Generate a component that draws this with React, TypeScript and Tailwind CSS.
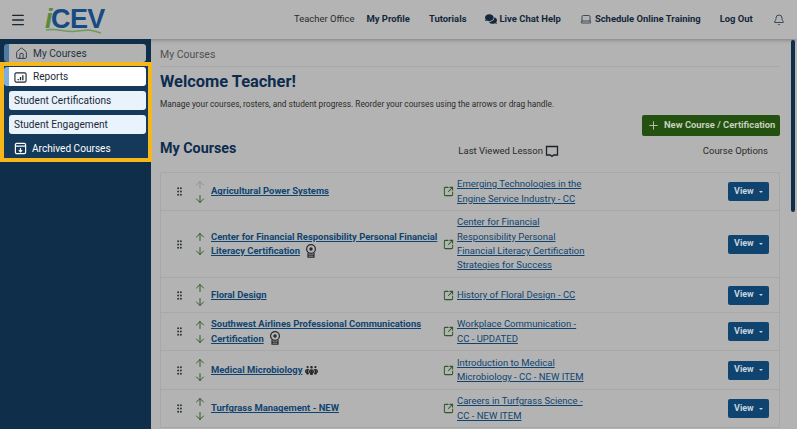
import { ArrowDown, ArrowUp, Bell, GripVertical, House, Laptop, Menu, Plus, SquareArrowOutUpRight } from 'lucide-react';
import { FaComments } from 'react-icons/fa';
import { FaPeopleGroup } from 'react-icons/fa6';

function ReportIcon() {
  return (
    <svg width="13" height="13" viewBox="0 0 14 14" fill="none" stroke="#1d2a36" strokeWidth="1.2">
      <rect x="1" y="2" width="12" height="10" rx="1.5" />
      <path d="M4.5 10V8.5M7 10V6.5M9.5 10V4.5" strokeWidth="1.4" />
    </svg>
  );
}

function ArchiveIcon() {
  return (
    <svg width="13" height="13" viewBox="0 0 14 14" fill="none" stroke="#fff" strokeWidth="1.3">
      <rect x="1.5" y="1.5" width="11" height="11" rx="1.5" />
      <path d="M1.5 4.5h11M7 6.5v4M5.2 8.8 7 10.6l1.8-1.8" />
    </svg>
  );
}

function CertIcon() {
  return (
    <svg width="12" height="14" viewBox="0 0 12 14" fill="none" stroke="#26292c" strokeWidth="1.2" className="shrink-0">
      <circle cx="6" cy="5" r="4.4" />
      <circle cx="6" cy="5" r="1.7" fill="#26292c" stroke="none" />
      <path d="M3 9v4.2h6V9M3 11.2h6" />
    </svg>
  );
}

function Logo() {
  return (
    <div className="relative h-[32px] w-[66px] ml-[18px] shrink-0">
      <span className="absolute left-[1px] top-[1px] text-[27px] leading-[28px] font-black italic text-[#5b8a3a] font-['Liberation_Sans',sans-serif]">i</span>
      <span className="absolute left-[7px] top-[1px] text-[27px] leading-[28px] font-black tracking-[-0.6px] text-[#164a80] font-['Liberation_Sans',sans-serif]">CEV</span>
      <svg className="absolute left-0 top-[23px]" width="60" height="9" viewBox="0 0 60 9" fill="none">
        <path d="M2 3C14 1 22 6 34 4S50 4 57 6" stroke="#6f9a5a" strokeWidth="1.5" />
      </svg>
    </div>
  );
}

type Course = {
  title: string;
  lesson: string;
  height: string;
  extra?: 'cert' | 'group';
  upDisabled?: boolean;
};

const courses: Course[] = [
  { title: 'Agricultural Power Systems', lesson: 'Emerging Technologies in the Engine Service Industry - CC', height: 'h-[38px]', upDisabled: true },
  { title: 'Center for Financial Responsibility Personal Financial Literacy Certification', lesson: 'Center for Financial Responsibility Personal Financial Literacy Certification Strategies for Success', height: 'h-[67px]', extra: 'cert' },
  { title: 'Floral Design', lesson: 'History of Floral Design - CC', height: 'h-[35px]' },
  { title: 'Southwest Airlines Professional Communications Certification', lesson: 'Workplace Communication - CC - UPDATED', height: 'h-[38px]', extra: 'cert' },
  { title: 'Medical Microbiology', lesson: 'Introduction to Medical Microbiology - CC - NEW ITEM', height: 'h-[39px]', extra: 'group' },
  { title: 'Turfgrass Management - NEW', lesson: 'Careers in Turfgrass Science - CC - NEW ITEM', height: 'h-[38px]' },
];

function CourseRow({ course }: { course: Course }) {
  return (
    <div className={`flex items-center border-b border-[#a8a8a8] shrink-0 ${course.height}`}>
      <GripVertical size={11} strokeWidth={2.4} className="ml-[13px] text-[#2c3a2c] shrink-0" />
      <div className="ml-[8px] w-[13px] flex flex-col items-center gap-[2px] shrink-0">
        <ArrowUp size={12} strokeWidth={1.8} className={course.upDisabled ? 'text-[#8e8e8e]' : 'text-[#28501c]'} />
        <ArrowDown size={12} strokeWidth={1.8} className="text-[#28501c]" />
      </div>
      <div className="ml-[5px] w-[232px] shrink-0 text-[9.45px] leading-[14.3px] font-bold text-[#0f4470] underline">
        {course.title}
        {course.extra === 'cert' && <span className="inline-block align-middle ml-[5px] mt-[-2px]"><CertIcon /></span>}
        {course.extra === 'group' && <FaPeopleGroup size={13} className="inline-block align-middle ml-[3px] text-[#26292c] no-underline" />}
      </div>
      <SquareArrowOutUpRight size={11} strokeWidth={2.2} className="text-[#2f5a28] shrink-0" />
      <div className="ml-[3px] w-[129px] shrink-0 text-[9.5px] leading-[14.3px] text-[#0f4470] underline">{course.lesson}</div>
      <div className="ml-[142px] w-[41px] h-[19px] shrink-0 flex items-center justify-between rounded-[2px] bg-[#0f4470] pl-[6px] pr-[6px] text-[9px] font-bold text-[#c9d3dc]">
        View
        <span className="h-0 w-0 border-x-[2px] border-t-[2px] border-x-transparent border-t-[#c9d3dc]" />
      </div>
    </div>
  );
}

export default function App() {
  return (
    <div className="h-[429px] w-[797px] overflow-hidden bg-[#b3b3b3] font-['Roboto',sans-serif] flex flex-col relative">
      <header className="h-[39px] shrink-0 flex items-center bg-[#b4b4b4] shadow-[0_1px_4px_rgba(0,0,0,0.3)] z-10 text-[9.45px] whitespace-nowrap">
        <Menu size={16} strokeWidth={2} className="ml-[10px] text-[#1a2733] shrink-0" />
        <Logo />
        <span className="ml-[184px] text-[#2b2b2b]">Teacher Office</span>
        <nav className="ml-[12px] flex items-center font-bold text-[#14283c]">
          <span>My Profile</span>
          <span className="ml-[19px]">Tutorials</span>
          <span className="ml-[19px] flex items-center gap-[2px]"><FaComments size={12} />Live Chat Help</span>
          <span className="ml-[19px] flex items-center gap-[3px]"><Laptop size={12} strokeWidth={1.5} />Schedule Online Training</span>
          <span className="ml-[19px]">Log Out</span>
        </nav>
        <Bell size={12} strokeWidth={1.5} className="ml-[20px] text-[#14283c] shrink-0" />
      </header>
      <div className="flex flex-1 min-h-0">
        <aside className="w-[151px] shrink-0 bg-[#0f2e4a] pt-[5px] relative z-10">
          <div className="mx-[4px] h-[18px] flex items-center rounded-[3px] border-l-[5px] border-[#4d7ba3] bg-[#b2b2b2] text-[10.2px] text-[#26323d] w-[142px] pt-[1px]">
            <House size={13} strokeWidth={1.6} className="ml-[6px]" />
            <span className="ml-[5px]">My Courses</span>
          </div>
          <div className="w-[152px] border-[4px] border-[#f6b71d] bg-[#14395a] pt-[1px] text-[10.1px] flex flex-col gap-[5px]">
            <div className="h-[19px] flex items-center rounded-[3px] border-l-[5px] border-[#7fb0dd] bg-white text-[#1d2a36] w-[142px] pt-[1px]">
              <span className="ml-[5px] flex"><ReportIcon /></span>
              <span className="ml-[6px]">Reports</span>
            </div>
            <div className="ml-[5px] w-[137px] h-[19px] flex items-center rounded-[3px] bg-[#e9f3fc] text-[#1d2a36] pl-[5px]">Student Certifications</div>
            <div className="ml-[5px] w-[137px] h-[19px] flex items-center rounded-[3px] bg-[#e9f3fc] text-[#1d2a36] pl-[5px]">Student Engagement</div>
            <div className="h-[19px] flex items-center text-white">
              <span className="ml-[10px] flex"><ArchiveIcon /></span>
              <span className="ml-[5px]">Archived Courses</span>
            </div>
          </div>
        </aside>
        <main className="flex-1 min-w-0 pl-[9px] relative">
          <div className="w-[620px] h-[28px] flex items-center border-b border-[#a8a8a8] pt-[5px] text-[10.5px] text-[#505050]">My Courses</div>
          <h1 className="mt-[4px] text-[16.4px] leading-[22px] font-bold text-[#0c2c4f]">Welcome Teacher!</h1>
          <p className="mt-[5px] text-[8.3px] leading-[12px] text-[#2b2b2b]">Manage your courses, rosters, and student progress. Reorder your courses using the arrows or drag handle.</p>
          <div className="w-[620px] flex justify-end mt-[5px]">
            <div className="w-[138px] h-[21px] flex items-center rounded-[2px] bg-[#245010] text-[9.4px] font-bold text-[#c3d0bb] whitespace-nowrap">
              <Plus size={13} strokeWidth={1.6} className="ml-[5px]" />
              <span className="ml-[4px]">New Course / Certification</span>
            </div>
          </div>
          <div className="w-[620px] flex items-center h-[20px] mt-[3px]">
            <h2 className="text-[14.3px] font-bold leading-[20px] mt-[-3px] text-[#0c2c4f]">My Courses</h2>
            <span className="ml-[222px] mt-[5px] text-[9.5px] text-[#2b2b2b]">Last Viewed Lesson</span>
            <svg className="ml-[2px] mt-[5px]" width="14" height="13" viewBox="0 0 14 13" fill="none" stroke="#1d2226" strokeWidth="1.3">
              <path d="M1.5 1.5h11v8.5h-3.8L7 11.5 5.3 10H1.5z" />
            </svg>
            <span className="ml-[auto] mr-[12px] mt-[5px] text-[9.5px] text-[#2b2b2b]">Course Options</span>
          </div>
          <div className="w-[620px] mt-[13px] border border-b-0 border-[#a8a8a8] rounded-t-[2px] flex flex-col">
            {courses.map((course) => (
              <CourseRow key={course.title} course={course} />
            ))}
          </div>
          <div className="absolute right-[2px] top-[1px] h-[172px] w-[4px] rounded-full bg-[#0f2e4a]" />
        </main>
      </div>
    </div>
  );
}
